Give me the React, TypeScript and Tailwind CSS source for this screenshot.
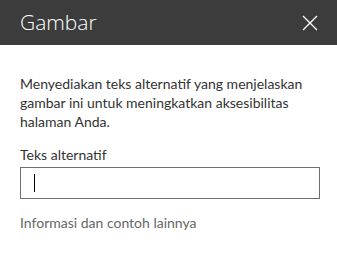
import React from "react";

export default function App() {
  return (
    <div className="w-[337px] h-[257px] bg-white font-['Lato',sans-serif] text-[#333333]">
      {/* Panel header */}
      <div className="h-[45px] bg-[#3c3c3c] flex items-center justify-between pl-5 pr-[19px]">
        <span className="text-[21px] font-light text-white leading-none font-['Open_Sans',sans-serif]">Gambar</span>
        <button className="w-4 h-4 flex items-center justify-center text-white">
          <svg width="16" height="16" viewBox="0 0 16 16" fill="none">
            <path d="M1 1L15 15M15 1L1 15" stroke="currentColor" strokeWidth="1.4" />
          </svg>
        </button>
      </div>

      {/* Panel body */}
      <div className="px-5 pt-[29px]">
        <p className="text-[14px] leading-[19px]">
          Menyediakan teks alternatif yang menjelaskan gambar ini untuk meningkatkan aksesibilitas halaman Anda.
        </p>
        <label className="block mt-[14px] text-[14px] leading-5">Teks alternatif</label>
        <div className="mt-[2px] w-[300px] h-[32px] border border-[#6e6e6e] flex items-center pl-[13px]">
          <div className="w-px h-[18px] bg-black" />
        </div>
        <div className="mt-[14px] text-[14px] leading-5 text-[#666666]">Informasi dan contoh lainnya</div>
      </div>
    </div>
  );
}
